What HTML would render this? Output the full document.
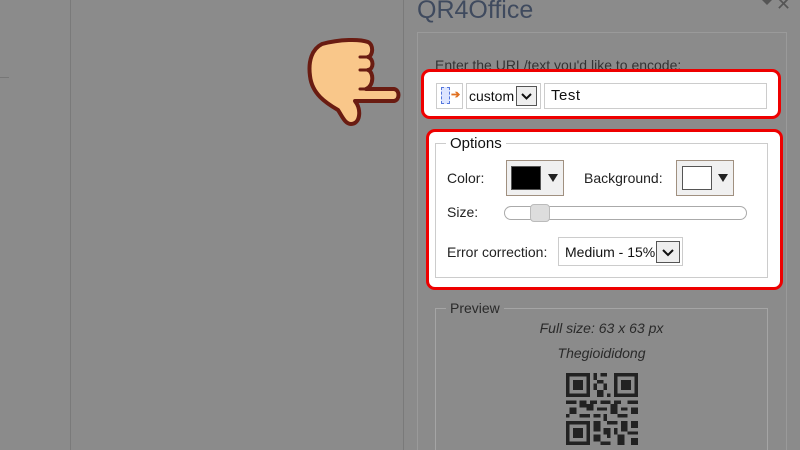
<!DOCTYPE html>
<html><head><meta charset="utf-8"><style>
*{margin:0;padding:0;box-sizing:border-box}
html{width:800px;height:450px;overflow:hidden}
body{width:800px;height:450px;overflow:hidden;background:#8b8b8b;position:relative;font-family:"Liberation Sans",sans-serif;}
.a{position:absolute}
.t{font-size:13px;color:#222}
</style></head><body>
<div class="a" style="left:0;top:77px;width:9px;height:1px;background:#777"></div>
<div class="a" style="left:70px;top:0;width:1px;height:450px;background:#7a7a7a"></div>
<div class="a" style="left:403px;top:0;width:1px;height:450px;background:#7a7a7a"></div>
<div class="a" style="left:417px;top:-4px;font-size:25px;color:#3f4a5e">QR4Office</div>
<div class="a" style="left:762px;top:0px;width:0;height:0;border-left:5px solid transparent;border-right:5px solid transparent;border-top:5px solid #555"></div>
<div class="a" style="left:776px;top:-6px;font-size:18px;color:#555">✕</div>
<div class="a" style="left:417px;top:32px;width:370px;height:430px;border:1px solid #9a9a9a"></div>
<div class="a t" style="left:435px;top:57px;color:#333;font-size:14px">Enter the URL/text you'd like to encode:</div>

<div class="a" style="left:421px;top:69px;width:360px;height:50px;background:#fff;border:3px solid #e00;border-radius:9px"></div>
<div class="a" style="left:436px;top:83px;width:27px;height:26px;border:1px solid #ccc;background:#fff"></div>
<div class="a" style="left:441px;top:87px;width:9px;height:17px;border:1px dashed #5577dd;background:#dde5ff"></div>
<div class="a" style="left:451px;top:88px;font-size:11px;color:#e07020;font-weight:bold">➔</div>
<div class="a" style="left:466px;top:83px;width:75px;height:26px;border:1px solid #ccc;background:#fff"></div>
<div class="a" style="left:469px;top:88px;font-size:14px;color:#111">custom</div>
<div class="a" style="left:516px;top:86px;width:21px;height:20px;border:1px solid #555;background:#eee"><svg width="19" height="18"><path d="M5 7l4.5 4.5L14 7" stroke="#111" stroke-width="2" fill="none"/></svg></div>
<div class="a" style="left:544px;top:83px;width:223px;height:26px;border:1px solid #ccc;background:#fff"></div>
<div class="a" style="left:551px;top:87px;font-size:15px;color:#111;letter-spacing:.5px">Test</div>

<div class="a" style="left:426px;top:129px;width:357px;height:161px;background:#fff;border:3px solid #e00;border-radius:9px"></div>
<div class="a" style="left:435px;top:143px;width:333px;height:135px;border:1px solid #ccc"></div>
<div class="a t" style="left:446px;top:135px;background:#fff;padding:0 4px;font-size:15px;color:#111">Options</div>
<div class="a t" style="left:447px;top:170px;font-size:14px;color:#222">Color:</div>
<div class="a" style="left:506px;top:160px;width:58px;height:36px;border:1px solid #a09080;background:#f0f0f0"></div>
<div class="a" style="left:511px;top:166px;width:30px;height:24px;background:#000;border:1px solid #555"></div>
<div class="a" style="left:548px;top:174px;border-left:5px solid transparent;border-right:5px solid transparent;border-top:8px solid #222"></div>
<div class="a t" style="left:584px;top:170px;font-size:14px;color:#222">Background:</div>
<div class="a" style="left:676px;top:160px;width:58px;height:36px;border:1px solid #a09080;background:#f0f0f0"></div>
<div class="a" style="left:682px;top:166px;width:30px;height:24px;background:#fff;border:1px solid #555"></div>
<div class="a" style="left:718px;top:174px;border-left:5px solid transparent;border-right:5px solid transparent;border-top:8px solid #222"></div>
<div class="a t" style="left:447px;top:204px;font-size:14px;color:#222">Size:</div>
<div class="a" style="left:504px;top:206px;width:243px;height:14px;border:1px solid #aaa;border-radius:7px;background:#fff"></div>
<div class="a" style="left:530px;top:204px;width:20px;height:18px;border:1px solid #bbb;border-radius:4px;background:#ddd"></div>
<div class="a t" style="left:447px;top:244px;font-size:14px;color:#222">Error correction:</div>
<div class="a" style="left:558px;top:237px;width:125px;height:29px;border:1px solid #ccc;background:#fff"></div>
<div class="a" style="left:565px;top:244px;font-size:14px;color:#111">Medium - 15%</div>
<div class="a" style="left:656px;top:241px;width:24px;height:22px;border:1px solid #555;background:#eee"><svg width="22" height="20"><path d="M6 8l5 5 5-5" stroke="#111" stroke-width="2" fill="none"/></svg></div>

<div class="a" style="left:435px;top:308px;width:333px;height:160px;border:1px solid #a5a5a5"></div>
<div class="a t" style="left:446px;top:300px;background:#8b8b8b;padding:0 4px;font-size:14px;color:#2a2a2a">Preview</div>
<div class="a" style="left:435px;top:320px;width:333px;text-align:center;font-size:14px;font-style:italic;color:#2a2a2a">Full size: 63 x 63 px</div>
<div class="a" style="left:435px;top:345px;width:333px;text-align:center;font-size:14px;font-style:italic;color:#2a2a2a">Thegioididong</div>
<svg class="a" style="left:566px;top:373px" width="72" height="72" viewBox="0 0 21 21" shape-rendering="crispEdges" fill="#222">
<path d="M0 0h7v7h-7zM1 1v5h5v-5zM2 2h3v3h-3z" fill-rule="evenodd"/>
<path d="M14 0h7v7h-7zM15 1v5h5v-5zM16 2h3v3h-3z" fill-rule="evenodd"/>
<path d="M0 14h7v7h-7zM1 15v5h5v-5zM2 16h3v3h-3z" fill-rule="evenodd"/>
<path d="M8 0h1v2h-1zM10 0h2v1h-2zM9 2h2v1h-2zM8 3h1v2h-1zM11 3h1v2h-1zM9 5h2v2h-2zM12 6h1v1h-1zM0 8h3v1h-3zM4 8h2v2h-2zM7 8h2v1h-2zM10 8h3v1h-3zM14 8h2v1h-2zM18 8h3v1h-3zM1 10h2v2h-2zM6 9h2v2h-2zM9 10h3v1h-3zM13 9h2v3h-2zM16 10h2v1h-2zM19 10h2v2h-2zM0 12h1v1h-1zM4 12h3v1h-3zM8 12h2v1h-2zM11 12h1v2h-1zM15 12h3v1h-3zM8 14h2v3h-2zM12 14h3v1h-3zM16 14h2v3h-2zM19 14h2v2h-2zM11 16h2v2h-2zM14 16h1v2h-1zM18 17h3v1h-3zM8 18h2v2h-2zM10 20h3v1h-3zM15 18h2v3h-2zM19 19h2v2h-2zM12 18h1v1h-1z"/>
</svg>

<svg class="a" style="left:300px;top:36px" width="102" height="95" viewBox="0 0 102 95">
<path d="M22 8 C40 3 60 3 68 6 C74 9 73 20 68 21 C74 23 74 33 68 34 C74 36 74 50 66 53 L94 53 C100 54 100 64 94 65 L55 65 C62 74 60 88 51 88 C45 88 42 80 38 74 C26 67 12 58 10 40 C8 25 12 13 22 8 Z" fill="#f9c78a" stroke="#6a1c12" stroke-width="4" stroke-linejoin="round"/>
<path d="M60 21 H70 M60 34 H70 M60 53 H68" stroke="#6a1c12" stroke-width="3" stroke-linecap="round"/>
</svg>
</body></html>
